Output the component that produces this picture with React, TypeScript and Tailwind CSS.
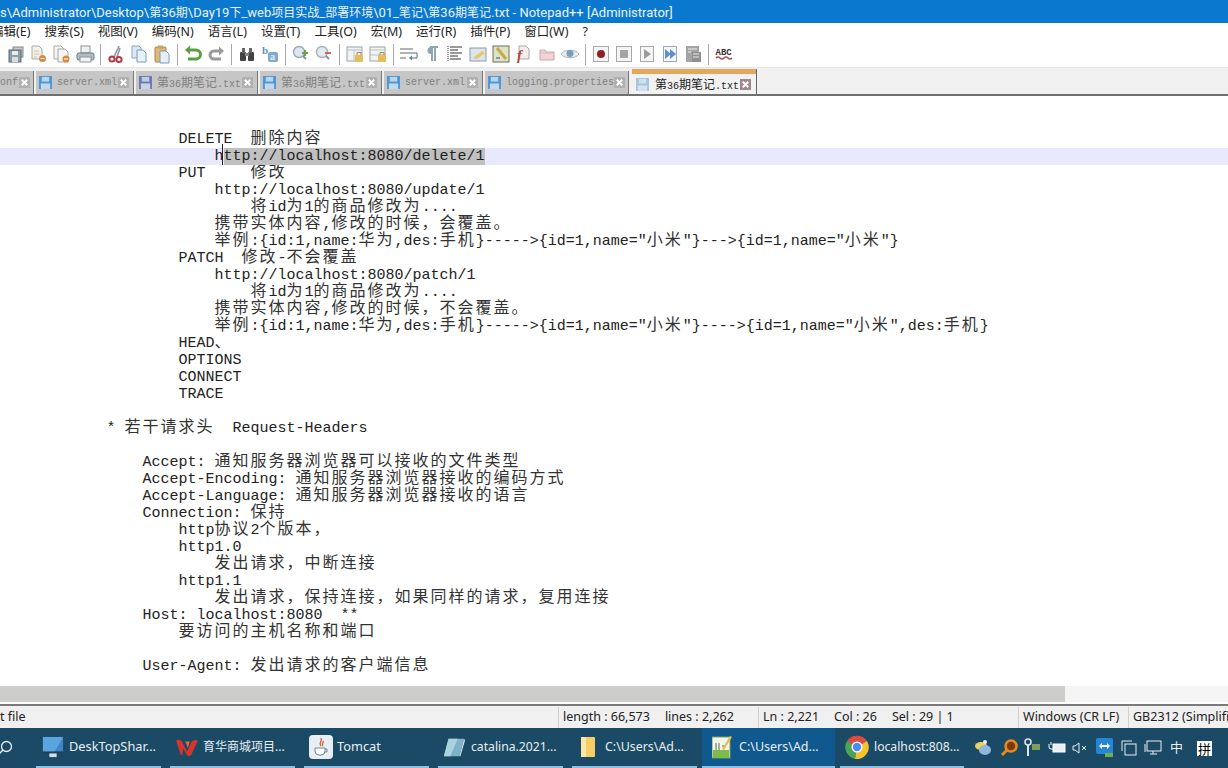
import type { ReactNode } from "react";

const uiFont = "font-['Noto_Sans','Noto_Sans_CJK_SC',sans-serif]";
const monoFont = "font-['Liberation_Mono','Noto_Sans_CJK_SC',monospace]";

const menus = ["编辑(E)", "搜索(S)", "视图(V)", "编码(N)", "语言(L)", "设置(T)", "工具(O)", "宏(M)", "运行(R)", "插件(P)", "窗口(W)", "?"];

const titleText = "s\\Administrator\\Desktop\\第36期\\Day19下_web项目实战_部署环境\\01_笔记\\第36期笔记.txt - Notepad++ [Administrator]";

const lines = [
  "",
  "",
  "                   DELETE  删除内容",
  "SELECTED",
  "                   PUT     修改",
  "                       http://localhost:8080/update/1",
  "                           将id为1的商品修改为....",
  "                       携带实体内容,修改的时候，会覆盖。",
  "                       举例:{id:1,name:华为,des:手机}----->{id=1,name=\"小米\"}--->{id=1,name=\"小米\"}",
  "                   PATCH  修改-不会覆盖",
  "                       http://localhost:8080/patch/1",
  "                           将id为1的商品修改为....",
  "                       携带实体内容,修改的时候，不会覆盖。",
  "                       举例:{id:1,name:华为,des:手机}----->{id=1,name=\"小米\"}---->{id=1,name=\"小米\",des:手机}",
  "                   HEAD、",
  "                   OPTIONS",
  "                   CONNECT",
  "                   TRACE",
  "",
  "           * 若干请求头  Request-Headers",
  "",
  "               Accept: 通知服务器浏览器可以接收的文件类型",
  "               Accept-Encoding: 通知服务器浏览器接收的编码方式",
  "               Accept-Language: 通知服务器浏览器接收的语言",
  "               Connection: 保持",
  "                   http协议2个版本，",
  "                   http1.0",
  "                       发出请求，中断连接",
  "                   http1.1",
  "                       发出请求，保持连接，如果同样的请求，复用连接",
  "               Host: localhost:8080  **",
  "                   要访问的主机名称和端口",
  "",
  "               User-Agent: 发出请求的客户端信息",
];

// CJK glyphs take two mono cells, 18px each. Line height 0 keeps the baseline on the mono strut
function CodeText({ text }: { text: string }) {
  const parts = text.split(/([\u3000-\u303f\u4e00-\u9fff\uff00-\uffef]+)/);
  return (
    <>
      {parts.map((part, i) =>
        i % 2 === 1 ? (
          <span key={i} className="font-['Noto_Sans_CJK_SC',sans-serif] text-[16px] leading-[0px] tracking-[2px] text-[#333]">
            {part}
          </span>
        ) : (
          <span key={i}>{part}</span>
        ),
      )}
    </>
  );
}

function CodeLine({ text }: { text: string }) {
  if (text === "SELECTED") {
    return (
      <div className="h-[17px] bg-[#e8e8ff] pl-[7.5px] whitespace-pre">
        {"                       h"}
        <span className="relative inline-block h-[17px] bg-[#c0c0c0]">
          <span className="absolute -top-[4px] left-[-2px] h-[21px] w-px bg-[#222]" />
          ttp://localhost:8080/delete/1
        </span>
      </div>
    );
  }
  return (
    <div className="h-[17px] pl-[7.5px] whitespace-pre">
      <CodeText text={text} />
    </div>
  );
}

function TitleText() {
  const parts = titleText.split(/([\u4e00-\u9fff]+)/);
  return (
    <>
      {parts.map((part, i) =>
        i % 2 === 1 ? (
          <span key={i} className="font-['Noto_Sans_CJK_SC',sans-serif] text-[12px]">
            {part}
          </span>
        ) : (
          <span key={i}>{part}</span>
        ),
      )}
    </>
  );
}

function Svg({ children, size = 20 }: { children: ReactNode; size?: number }) {
  return (
    <svg width={size} height={size} viewBox="0 0 20 20" fill="none">
      {children}
    </svg>
  );
}

function Page({ x = 4, y = 2, fill = "#f4f4f2" }: { x?: number; y?: number; fill?: string }) {
  return <path d={`M${x} ${y}h7l3 3v10h-10z`} fill={fill} stroke="#a9a9a9" />;
}

const toolIcons: ReactNode[] = [
  <Svg key="save">
    <rect x="7" y="3" width="10" height="10" fill="#c3c9cc" stroke="#7f8a90" />
    <rect x="3" y="6" width="12" height="12" fill="#8b9da8" stroke="#5c6b74" />
    <rect x="6" y="7" width="6" height="4" fill="#e6ebee" />
    <rect x="6" y="13" width="6" height="5" fill="#d7dde0" />
  </Svg>,
  <Svg key="close">
    <Page x={3} y={2} fill="#f5f1e6" />
    <path d="M5 7h5M5 10h5M5 13h3" stroke="#c9c4b8" />
    <circle cx="13.5" cy="14.5" r="3.5" fill="#d9893f" />
    <path d="M11.5 14.5h4" stroke="#fff" />
  </Svg>,
  <Svg key="closeall">
    <Page x={2} y={2} />
    <Page x={6} y={5} />
    <circle cx="14" cy="15" r="3.5" fill="#d9893f" />
    <path d="M12 15h4" stroke="#fff" />
  </Svg>,
  <Svg key="print">
    <rect x="6" y="2" width="9" height="7" fill="#eef1f3" stroke="#8d959b" />
    <rect x="2" y="9" width="17" height="7" rx="2" fill="#b3bcc3" stroke="#6f787f" />
    <rect x="5" y="13" width="11" height="5" fill="#f3f3f3" stroke="#8d959b" />
  </Svg>,
  <Svg key="cut">
    <path d="M13 2l-5 11M14 4l-3 9" stroke="#8f969b" strokeWidth="1.6" />
    <circle cx="6" cy="15" r="2.6" stroke="#b23a48" strokeWidth="2" />
    <circle cx="13" cy="15.5" r="2.6" stroke="#b23a48" strokeWidth="2" />
  </Svg>,
  <Svg key="copy">
    <path d="M3 2h7l2 2v10h-9z" fill="#dce8f2" stroke="#8aa6bd" />
    <path d="M8 6h6l3 3v9h-9z" fill="#e9f1f8" stroke="#7d9cb6" />
  </Svg>,
  <Svg key="paste">
    <rect x="3" y="3" width="11" height="15" rx="1" fill="#dfb77a" stroke="#a9824a" />
    <rect x="6" y="1.5" width="5" height="3" fill="#c9a263" />
    <path d="M8 7h6l3 3v9h-9z" fill="#e6eff7" stroke="#7d9cb6" />
  </Svg>,
  <Svg key="undo">
    <path d="M6 6h7a4 4 0 010 9H5" stroke="#5c9e3f" strokeWidth="3" />
    <path d="M7 1.5v9L2 6z" fill="#5c9e3f" />
  </Svg>,
  <Svg key="redo">
    <path d="M14 7H8a4 4 0 000 8h7" stroke="#9a9a9a" strokeWidth="3" />
    <path d="M13 2.5v9l5-4.5z" fill="#9a9a9a" />
  </Svg>,
  <Svg key="find">
    <rect x="3" y="8" width="6" height="9" rx="1" fill="#444" />
    <rect x="11" y="8" width="6" height="9" rx="1" fill="#444" />
    <rect x="5" y="4" width="3" height="5" fill="#666" />
    <rect x="12" y="4" width="3" height="5" fill="#666" />
    <rect x="8" y="9" width="4" height="3" fill="#888" />
  </Svg>,
  <Svg key="replace">
    <text x="2" y="10" fontSize="11" fontWeight="700" fontFamily="Liberation Serif" fill="#5f8fc0">b</text>
    <rect x="8" y="8" width="10" height="10" rx="2" fill="#7fa9cf" />
    <text x="10" y="16" fontSize="10" fontWeight="700" fontFamily="Liberation Serif" fill="#e5eef6">a</text>
  </Svg>,
  <Svg key="zoomin">
    <circle cx="8" cy="8" r="5.5" fill="#dce6ee" stroke="#9aa8b4" strokeWidth="1.4" />
    <path d="M12 12l3 3" stroke="#8a9298" strokeWidth="2" />
    <path d="M14 6v6M11 9h6" stroke="#6ea348" strokeWidth="2" />
  </Svg>,
  <Svg key="zoomout">
    <circle cx="8" cy="8" r="5.5" fill="#e4e9ee" stroke="#a5afb8" strokeWidth="1.4" />
    <path d="M12 12l3 3" stroke="#8a9298" strokeWidth="2" />
    <path d="M11 9h6" stroke="#c4685a" strokeWidth="2" />
  </Svg>,
  <Svg key="syncv">
    <rect x="2" y="3" width="15" height="14" fill="#f1f3f5" stroke="#9aa4ac" />
    <path d="M2 6h15M9 6v11" stroke="#b9c1c8" />
    <rect x="10" y="11" width="8" height="7" fill="#e5bb5b" />
    <path d="M12 11V8.500h4V11" stroke="#a98a43" />
  </Svg>,
  <Svg key="synch">
    <rect x="2" y="3" width="15" height="14" fill="#f1f3f5" stroke="#9aa4ac" />
    <path d="M2 6h15M2 11h15" stroke="#b9c1c8" />
    <rect x="10" y="11" width="8" height="7" fill="#e5bb5b" />
    <path d="M12 11V8.500h4V11" stroke="#a98a43" />
  </Svg>,
  <Svg key="wrap">
    <path d="M1 5h13M1 9h17v5h-6M1 14h6" stroke="#5d6a73" />
    <path d="M13 11.500v5l-3-2.500z" fill="#4f86b0" />
  </Svg>,
  <Svg key="pilcrow">
    <path d="M8 3h8M13 3v14M10 3v14" stroke="#8ea5b5" strokeWidth="2" />
    <path d="M9 3a3.500 3.500 0 000 7z" fill="#8ea5b5" />
  </Svg>,
  <Svg key="indent">
    <path d="M3 2v16" stroke="#333" strokeDasharray="1 1" />
    <path d="M5 3h12M5 6h8M5 9h12M5 12h8M5 15h11" stroke="#333" />
  </Svg>,
  <Svg key="udl">
    <rect x="2" y="4" width="16" height="13" fill="#dbe6ec" stroke="#8d9aa3" />
    <path d="M5 14l9-7 3 2-8 6z" fill="#e8c566" />
  </Svg>,
  <Svg key="docmap">
    <rect x="2" y="2" width="16" height="16" fill="#dfe3c4" stroke="#6b7060" />
    <path d="M6 4l9 11" stroke="#c9a94b" strokeWidth="3" />
    <path d="M5 14h4" stroke="#7b9bb5" strokeWidth="2" />
  </Svg>,
  <Svg key="funclist">
    <Page x={5} y={2} fill="#f7ecea" />
    <text x="3" y="16" fontSize="15" fontStyle="italic" fontWeight="700" fontFamily="Liberation Serif" fill="#b3453f">f</text>
  </Svg>,
  <Svg key="folder">
    <path d="M3 6h5l1 2h8v8H3z" fill="#f0d4d8" stroke="#c9a4aa" />
    <path d="M3 9h14" stroke="#d8b4ba" />
  </Svg>,
  <Svg key="eye">
    <path d="M1 10c3-5 15-5 18 0-3 5-15 5-18 0z" fill="#e6edf2" stroke="#a8b5be" />
    <circle cx="10" cy="9.500" r="3.500" fill="#7d9cb8" />
  </Svg>,
  <Svg key="rec">
    <rect x="2.500" y="2.500" width="15" height="15" fill="#f5f5f5" stroke="#a8a8a8" />
    <circle cx="10" cy="10" r="4" fill="#8e1f2a" />
  </Svg>,
  <Svg key="stop">
    <rect x="2.500" y="2.500" width="15" height="15" fill="#f5f5f5" stroke="#a8a8a8" />
    <rect x="6" y="6" width="8" height="8" fill="#a5a5a5" />
  </Svg>,
  <Svg key="play">
    <rect x="3.500" y="2.500" width="13" height="15" fill="#f5f5f5" stroke="#a8a8a8" />
    <path d="M7 5l7 5-7 5z" fill="#9a9a9a" />
  </Svg>,
  <Svg key="playn">
    <rect x="3.500" y="2.500" width="13" height="15" fill="#f3f6fa" stroke="#9aa8b8" />
    <path d="M5 5l6 5-6 5zM10 5l6 5-6 5z" fill="#5f8fc4" />
  </Svg>,
  <Svg key="savemacro">
    <rect x="3" y="2" width="13" height="16" fill="#a4a4a4" />
    <rect x="9" y="8" width="9" height="10" fill="#8f8f8f" />
    <path d="M5 5h9M5 8h3M10 10h6M10 13h6" stroke="#eee" />
  </Svg>,
  <Svg key="abc">
    <text x="1.500" y="11" fontSize="9" fontWeight="700" fontFamily="Liberation Mono" fill="#333">ABC</text>
    <path d="M2 14q2-2 4 0t4 0 4 0 4 0" stroke="#b44b50" strokeWidth="1.600" />
  </Svg>,
];

// separators come after these toolbar positions
const sepAfter = [3, 6, 8, 10, 12, 14, 22, 27];

function Toolbar() {
  return (
    <div className="flex h-[26px] shrink-0 items-center bg-white pl-[4px]">
      {toolIcons.map((icon, i) => (
        <div key={i} className="flex items-center">
          <div className="flex w-[23px] justify-center">{icon}</div>
          {sepAfter.includes(i) && (
            <div className="flex w-[8px] justify-center">
              <div className="h-[21px] w-px bg-[#a8a8a8]" />
            </div>
          )}
        </div>
      ))}
    </div>
  );
}

function TabIcon({ tint, gap }: { tint: string; gap: string }) {
  const colors: Record<string, string> = {
    blue: "#4d97d6",
    purple: "#6f78b4",
    pale: "#a9c4e2",
  };
  return (
    <svg width="13" height="13" viewBox="0 0 14 14" className={`shrink-0 ${gap}`}>
      <rect width="14" height="14" fill={colors[tint]} />
      <rect x="3" y="1" width="8" height="5" fill="#dfe9f2" opacity="0.75" />
      <rect x="2" y="8" width="10" height="6" fill="#dfe9f2" opacity="0.8" />
    </svg>
  );
}

function TabClose({ active }: { active?: boolean }) {
  return (
    <svg width="11" height="11" viewBox="0 0 14 14" className="ml-auto shrink-0">
      <rect width="14" height="14" fill={active ? "#9c8a8f" : "#b0b0b0"} />
      <path d="M3.500 3.500l7 7M10.500 3.500l-7 7" stroke="#fff" strokeWidth="2.400" />
    </svg>
  );
}

function TabLabel({ text }: { text: string }) {
  const parts = text.split(/([\u4e00-\u9fff]+)/);
  return (
    <span className={`${monoFont} whitespace-pre text-[10px]`}>
      {parts.map((part, i) =>
        i % 2 === 1 ? (
          <span key={i} className="font-['Noto_Sans_CJK_SC',sans-serif] text-[12px]">
            {part}
          </span>
        ) : (
          <span key={i}>{part}</span>
        ),
      )}
    </span>
  );
}

const tabs = [
  { label: "server.xml", tint: "blue", width: "w-[98px]" },
  { label: "第36期笔记.txt", tint: "purple", width: "w-[122px]" },
  { label: "第36期笔记.txt", tint: "blue", width: "w-[122px]" },
  { label: "server.xml", tint: "blue", width: "w-[99px]" },
  { label: "logging.properties", tint: "blue", width: "w-[144px]" },
];

function TabBar() {
  return (
    <div className="flex h-[27px] shrink-0 items-end gap-[2px] border-t border-[#e4e4e4] bg-[#f0f0f0]">
      <div className="flex h-[23px] w-[34px] items-center justify-end gap-px border-r border-[#777] bg-[#c6c6c6] pr-[3px] text-[#808080]">
        <TabLabel text="onf" />
        <TabClose />
      </div>
      {tabs.map((tab, i) => (
        <div
          key={i}
          className={`flex h-[23px] ${tab.width} items-center border-r border-[#777] bg-[#c6c6c6] pl-[3px] pr-[4px] text-[#808080]`}
        >
          <TabIcon tint={tab.tint} gap="mr-[5px]" />
          <TabLabel text={tab.label} />
          <TabClose />
        </div>
      ))}
      <div className="ml-[1px] flex h-[25px] w-[125px] flex-col border-r border-[#666] bg-[#f2f2f2]">
        <div className="h-[5px] shrink-0 bg-[#e4a85c]" />
        <div className="flex flex-1 items-center pl-[4px] pr-[5px] text-[#222]">
          <TabIcon tint="pale" gap="mr-[6px]" />
          <TabLabel text="第36期笔记.txt" />
          <TabClose active />
        </div>
      </div>
    </div>
  );
}

function StatusCell({ width, children }: { width: string; children: ReactNode }) {
  return <div className={`${width} flex h-full shrink-0 items-center gap-[15px] whitespace-nowrap border-l border-[#cfcfcf] pl-[4px]`}>{children}</div>;
}

const taskIcons: Record<string, ReactNode> = {
  desktop: (
    <svg width="22" height="24" viewBox="0 0 24 26">
      <rect x="1" y="2" width="22" height="16" fill="#3e86c9" />
      <path d="M1 2h22l-9 16H1z" fill="#5aa5e0" />
      <rect x="1" y="18" width="22" height="2" fill="#233f58" />
      <rect x="8" y="20" width="8" height="4" fill="#d5dde2" />
    </svg>
  ),
  wps: (
    <svg width="22" height="20" viewBox="0 0 24 22">
      <path d="M0 4q3-2 6 0l6 12 5-11q3-3 7-1l-7 15q-2 3-5 1L8 13l-1 6q-1 2-2 0z" fill="#d7342b" />
      <path d="M10 5h5l-2 7z" fill="#e9683a" />
    </svg>
  ),
  tomcat: (
    <svg width="24" height="24" viewBox="0 0 24 24">
      <rect width="24" height="24" rx="4" fill="#e8eef2" />
      <path d="M6 13h10v3a4 4 0 01-4 4h-2a4 4 0 01-4-4z" fill="#fff" stroke="#6b86a5" />
      <path d="M12 3c2 3-3 4 0 8M14 6c1 2-2 3 0 5" stroke="#d9663a" strokeWidth="1.400" fill="none" />
      <path d="M16 14h2v3h-2" stroke="#6b86a5" fill="none" />
    </svg>
  ),
  notebook: (
    <svg width="22" height="24" viewBox="0 0 24 24">
      <path d="M6 3h17l-5 19H1z" fill="#7fb3c9" />
      <path d="M6 3h10L8 22H1z" fill="#a9d3df" />
      <path d="M18 22l5-19 1 2-5 17z" fill="#dfe6ea" />
    </svg>
  ),
  folder: (
    <svg width="16" height="22" viewBox="0 0 16 22">
      <rect x="1" y="1" width="14" height="20" rx="1" fill="#f5cf66" />
      <rect x="1" y="1" width="5" height="20" fill="#fbe7a6" />
    </svg>
  ),
  npp: (
    <svg width="20" height="24" viewBox="0 0 20 24">
      <rect x="0" y="2" width="18" height="21" fill="#f2f7e8" stroke="#7da050" />
      <rect x="1" y="15" width="16" height="8" fill="#7dbb4e" />
      <path d="M4 8v7M7 8v7M10 11h4" stroke="#5b6a3e" />
      <path d="M10 14L18 1l2 1-8 13z" fill="#e3bd5a" />
    </svg>
  ),
  chrome: (
    <svg width="24" height="24" viewBox="0 0 24 24">
      <path d="M12 12L2 6A12 12 0 0122 6z" fill="#dd4b3e" />
      <path d="M12 12L2 6a12 12 0 008 18z" fill="#4aa45a" />
      <path d="M12 12l10-6a12 12 0 01-12 18z" fill="#f2c230" />
      <circle cx="12" cy="12" r="5.500" fill="#fff" />
      <circle cx="12" cy="12" r="4.200" fill="#4b8bf5" />
    </svg>
  ),
};

const taskItems = [
  { icon: "desktop", label: "DeskTopShar...", gap: "gap-[5px]", pad: "pl-[6px]", text: "text-[12.8px]" },
  { icon: "wps", label: "育华商城项目...", gap: "gap-[5px]", pad: "pl-[6px]", text: "text-[12px]" },
  { icon: "tomcat", label: "Tomcat", gap: "gap-[4px]", pad: "pl-[5px]", text: "text-[12.8px]" },
  { icon: "notebook", label: "catalina.2021...", gap: "gap-[6px]", pad: "pl-[5px]", text: "text-[12.2px]" },
  { icon: "folder", label: "C:\\Users\\Ad...", gap: "gap-[9px]", pad: "pl-[8px]", text: "text-[12.4px]" },
];

function TaskItem({ icon, label, gap, pad, text }: { icon: string; label: string; gap: string; pad: string; text: string }) {
  return (
    <div className={`flex h-full w-[125px] items-center ${gap} ${pad} ${text} border-b-2 border-[#8dc0e0] whitespace-nowrap`}>
      {taskIcons[icon]}
      <span>{label}</span>
    </div>
  );
}

function Tray() {
  return (
    <div className="ml-[9px] flex h-full flex-1 items-center text-[#e8eef2]">
      <svg width="16" height="18" viewBox="0 0 16 18" className="ml-[2px]">
        <ellipse cx="6" cy="7" rx="6" ry="4" fill="#f0cf5a" />
        <ellipse cx="10" cy="11" rx="6" ry="5" fill="#8fb8e0" />
        <circle cx="10" cy="3" r="2" fill="#e8eef2" />
      </svg>
      <svg width="18" height="18" viewBox="0 0 18 18" className="ml-[9px]">
        <circle cx="11" cy="7" r="5.500" fill="#7a3b0a" stroke="#e88a1c" strokeWidth="2.500" />
        <path d="M7 11l-5 5" stroke="#e88a1c" strokeWidth="3" />
      </svg>
      <svg width="16" height="20" viewBox="0 0 16 20" className="ml-[6px]">
        <circle cx="4" cy="4" r="3" fill="none" stroke="#e5e5e5" strokeWidth="1.500" />
        <path d="M4 7v11" stroke="#e5e5e5" strokeWidth="2" />
        <rect x="8" y="6" width="8" height="6" fill="#7f9f5a" />
      </svg>
      <svg width="18" height="14" viewBox="0 0 18 14" className="ml-[8px]">
        <rect x="5" y="3" width="12" height="8" fill="#e8eef2" stroke="#fff" />
        <path d="M1 3v3a2 2 0 002 2h2M3 1v3" stroke="#fff" fill="none" />
      </svg>
      <svg width="16" height="14" viewBox="0 0 16 14" className="ml-[6px]">
        <path d="M1 5h2l4-3v10L3 9H1z" fill="none" stroke="#e8eef2" />
        <path d="M10 5l4 4M14 5l-4 4" stroke="#e8eef2" />
      </svg>
      <svg width="18" height="20" viewBox="0 0 18 20" className="ml-[8px]">
        <rect width="17" height="16" rx="2" fill="#2585d8" />
        <path d="M3 8l3-3v2h5V5l3 3-3 3V9H6v2z" fill="#fff" />
        <rect x="9" y="15" width="8" height="4" fill="#6fb04a" />
      </svg>
      <svg width="16" height="16" viewBox="0 0 16 16" fill="none" stroke="#e8eef2" className="ml-[7px]">
        <path d="M1 11V1h10" />
        <rect x="4" y="4" width="11" height="11" />
      </svg>
      <svg width="18" height="16" viewBox="0 0 18 16" fill="none" stroke="#e8eef2" className="ml-[7px]">
        <rect x="3" y="1" width="14" height="10" />
        <path d="M1 4v8M6 14h7M9 11v3" />
      </svg>
      <span className={`${uiFont} ml-[8px] text-[13px]`}>中</span>
      <span className="ml-[14px] flex h-[15px] w-[15px] items-center justify-center bg-white font-['Noto_Sans_CJK_SC',sans-serif] text-[13px] leading-none text-black">拼</span>
    </div>
  );
}

export default function App() {
  return (
    <div className={`flex h-[768px] w-[1228px] flex-col overflow-hidden bg-white ${uiFont}`}>
      <div className="h-[23px] shrink-0 whitespace-pre bg-[#0b78cf] font-['Roboto','Noto_Sans_CJK_SC',sans-serif] text-[13px] leading-[23px] text-[#eaf4fb]">
        <TitleText />
      </div>

      <div className="-ml-[9px] flex h-[18px] shrink-0 items-center gap-[14px] whitespace-nowrap bg-white pt-[1px] text-[12.5px] text-[#222]">
        {menus.map((m) => (
          <span key={m}>{m}</span>
        ))}
      </div>

      <Toolbar />
      <TabBar />
      <div className="h-[2px] shrink-0 bg-[#6f6f6f]" />

      <div className={`min-h-0 flex-1 overflow-hidden pt-[1px] ${monoFont} text-[15px] leading-[17px] text-[#222]`}>
        {lines.map((line, i) => (
          <CodeLine key={i} text={line} />
        ))}
      </div>

      <div className="flex h-[16px] shrink-0 bg-[#f5f5f5]">
        <div className="h-full w-[1065px] bg-[#cdcdcb]" />
      </div>
      <div className="h-[4px] shrink-0 border-b-2 border-[#7a7a7a] bg-white" />

      <div className="flex h-[22px] shrink-0 items-center bg-[#f0f0f0] pt-[1px] text-[12.5px] text-[#222]">
        <div className="w-[558px] shrink-0">t file</div>
        <StatusCell width="w-[200px]">
          <span>length : 66,573</span>
          <span>lines : 2,262</span>
        </StatusCell>
        <StatusCell width="w-[260px]">
          <span>Ln : 2,221</span>
          <span>Col : 26</span>
          <span>Sel : 29 | 1</span>
        </StatusCell>
        <StatusCell width="w-[110px]">Windows (CR LF)</StatusCell>
        <StatusCell width="w-[100px]">GB2312 (Simplified)</StatusCell>
      </div>

      <div className="flex h-[40px] shrink-0 items-stretch bg-[#1b4a66] text-[12.5px] text-[#e8eef2]">
        <div className="flex w-[36px] shrink-0 items-center">
          <svg width="16" height="16" viewBox="0 0 16 16" fill="none" stroke="#e8eef2" strokeWidth="1.300" className="-ml-[3px]">
            <circle cx="9.500" cy="6.500" r="5" />
            <path d="M6 10l-4 4" />
          </svg>
        </div>
        <div className="flex gap-[9px]">
          {taskItems.map((item) => (
            <TaskItem key={item.label} {...item} />
          ))}
        </div>
        <div className="ml-[5px] flex w-[133px] shrink-0 items-center gap-[7px] whitespace-nowrap border-b-2 border-[#8dc0e0] bg-[#10598f] pl-[10px]">
          {taskIcons.npp}
          <span>C:\Users\Ad...</span>
        </div>
        <div className="ml-[5px] flex w-[124px] shrink-0 items-center gap-[5px] whitespace-nowrap border-b-2 border-[#8dc0e0] pl-[5px] text-[12.2px]">
          {taskIcons.chrome}
          <span>localhost:808...</span>
        </div>
        <Tray />
      </div>
    </div>
  );
}
